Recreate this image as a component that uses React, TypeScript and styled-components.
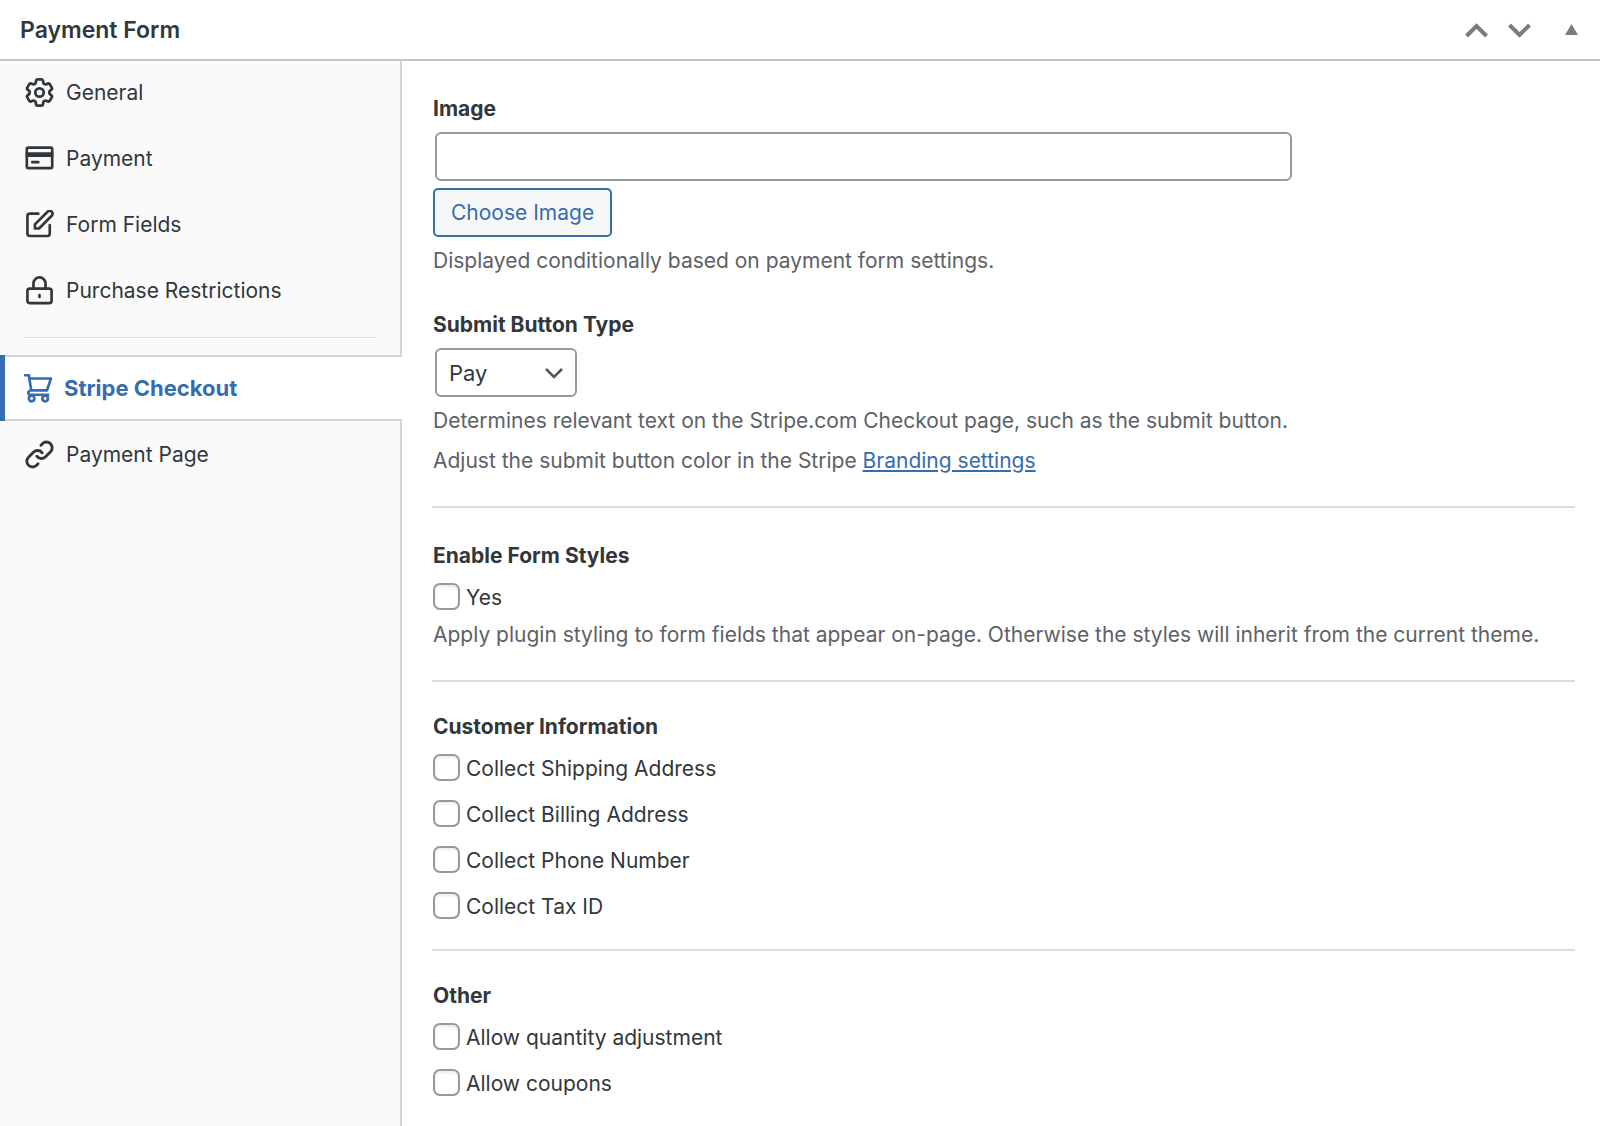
import React from "react";
import styled, { createGlobalStyle, css } from "styled-components";

const Global = createGlobalStyle`
  *, *::before, *::after { box-sizing: border-box; }
  body { margin: 0; background: #fff; }
  body, input, select, button {
    font-family: Inter, "Liberation Sans", sans-serif;
    font-size: 21px;
    color: #32373c;
  }
`;

const Page = styled.div`
  display: flex;
  flex-direction: column;
  min-height: 100vh;
`;

const Header = styled.header`
  display: flex;
  align-items: center;
  justify-content: space-between;
  height: 61px;
  padding: 0 21px 0 20px;
  border-bottom: 2px solid #c3c4c7;
`;

const Title = styled.h2`
  margin: 0;
  font-size: 23px;
  line-height: 28px;
  font-weight: 600;
`;

const Handles = styled.div`
  display: flex;
  align-items: center;
  gap: 18px;
`;

const Handle = styled.button<{ $last?: boolean }>`
  display: flex;
  padding: 0;
  border: 0;
  background: none;
  color: #787c82;
  margin-left: ${(p) => (p.$last ? "14px" : "0")};
`;

const Columns = styled.div`
  display: flex;
  flex: 1;
`;

const Sidebar = styled.nav`
  display: flex;
  flex-direction: column;
  width: 402px;
  flex-shrink: 0;
`;

const Group = styled.div<{ $fill?: boolean }>`
  display: flex;
  flex-direction: column;
  gap: 4px;
  background: #fafafa;
  border-right: 2px solid #d2d4d5;
  padding: ${(p) => (p.$fill ? "2px 0 0" : "0 0 17px")};
  flex: ${(p) => (p.$fill ? "1" : "none")};
`;

const Divider = styled.hr`
  width: calc(100% - 46px);
  margin: 12px 23px 0;
  border: 0;
  border-top: 1px solid #dfe0e1;
`;

const Tab = styled.a<{ $active?: boolean }>`
  display: flex;
  align-items: center;
  gap: 12px;
  height: 62px;
  padding: 0 25px;
  color: inherit;
  text-decoration: none;
  ${(p) =>
    p.$active &&
    css`
      position: relative;
      height: 66px;
      gap: 11px;
      padding: 0 24px;
      border: solid #d2d4d5;
      border-width: 2px 0;
      color: #366dad;
      font-size: 22px;
      font-weight: 700;
      &::before {
        content: "";
        position: absolute;
        inset: -2px auto -2px 0;
        width: 5px;
        background: #366dad;
      }
    `}
`;

const Content = styled.main`
  flex: 1;
  min-width: 0;
  padding: 35px 25px 28px 31px;
`;

const Field = styled.div`
  display: flex;
  flex-direction: column;
  align-items: flex-start;
  & + & { margin-top: 36px; }
`;

const labelText = css`
  display: block;
  padding: 0;
  line-height: 26px;
  font-weight: 700;
`;

const Label = styled.label`
  ${labelText}
  margin-bottom: 10px;
`;

const Legend = styled.legend`
  ${labelText}
  margin-bottom: 14px;
`;

const TextInput = styled.input`
  width: 75%;
  height: 49px;
  margin-left: 2px;
  padding: 0 14px;
  border: 2px solid #96999d;
  border-radius: 6px;
  background: #fff;
`;

const Button = styled.button`
  height: 49px;
  margin-top: 7px;
  padding: 0 16px;
  border: 2px solid #366dad;
  border-radius: 5px;
  background: #f6f7f7;
  color: #366dad;
`;

const SelectBox = styled.div`
  display: grid;
  align-items: center;
  margin-left: 2px;
  svg {
    grid-area: 1 / 1;
    justify-self: end;
    margin-right: 13px;
    pointer-events: none;
  }
`;

const Select = styled.select`
  grid-area: 1 / 1;
  appearance: none;
  width: 142px;
  height: 49px;
  padding: 0 40px 0 12px;
  border: 2px solid #96999d;
  border-radius: 6px;
  background: #fff;
  font-size: 22px;
`;

const Help = styled.p<{ $tight?: boolean }>`
  margin: ${(p) => (p.$tight ? "7px" : "9px")} 0 0;
  line-height: 30px;
  color: #5d6168;
  & + & { margin-top: 10px; }
`;

const Link = styled.a`
  color: #366dad;
`;

const Separator = styled.hr<{ $place?: "first" | "last" }>`
  margin: ${(p) => (p.$place === "last" ? "27px" : "30px")} 0 ${(p) => (p.$place === "first" ? "35px" : "32px")} -1px;
  border: 0;
  border-top: 2px solid #dcdcde;
`;

const Fieldset = styled.fieldset`
  margin: 0;
  padding: 0;
  border: 0;
`;

const Options = styled.div`
  display: flex;
  flex-direction: column;
  align-items: flex-start;
  gap: 16px;
`;

const Option = styled.label`
  display: flex;
  align-items: flex-start;
  gap: 6px;
  line-height: 30px;
`;

const Checkbox = styled.input`
  appearance: none;
  width: 27px;
  height: 27px;
  margin: 0;
  border: 2px solid #96999d;
  border-radius: 7px;
  background: #fff;
  box-shadow: inset 0 2px 3px rgba(0, 0, 0, 0.08);
  &:checked { background: #366dad; }
`;

type IconProps = { children: React.ReactNode; width?: number; box?: string };

const Icon = ({ children, width = 2.2, box = "0 0 24 24" }: IconProps) => (
  <svg width="29" height="29" viewBox={box} fill="none" stroke="currentColor" strokeWidth={width} strokeLinecap="round" strokeLinejoin="round" aria-hidden="true">
    {children}
  </svg>
);

const Gear = () => (
  <Icon box="2 2 20 20" width={1.9}>
    <path d="M9.594 3.94c.09-.542.56-.94 1.11-.94h2.593c.55 0 1.02.398 1.11.94l.213 1.281c.063.374.313.686.645.87.074.04.147.083.22.127.325.196.72.257 1.075.124l1.217-.456a1.125 1.125 0 0 1 1.37.49l1.296 2.247a1.125 1.125 0 0 1-.26 1.431l-1.003.827c-.293.241-.438.613-.43.992a7.723 7.723 0 0 1 0 .255c-.008.378.137.75.43.991l1.004.827c.424.35.534.955.26 1.43l-1.298 2.247a1.125 1.125 0 0 1-1.369.491l-1.217-.456c-.355-.133-.75-.072-1.076.124a6.47 6.47 0 0 1-.22.128c-.331.183-.581.495-.644.869l-.213 1.281c-.09.543-.56.94-1.11.94h-2.594c-.55 0-1.019-.398-1.11-.94l-.213-1.281c-.062-.374-.312-.686-.644-.87a6.52 6.52 0 0 1-.22-.127c-.325-.196-.72-.257-1.076-.124l-1.217.456a1.125 1.125 0 0 1-1.369-.49l-1.297-2.247a1.125 1.125 0 0 1 .26-1.431l1.004-.827c.292-.24.437-.613.43-.991a6.932 6.932 0 0 1 0-.255c.007-.38-.138-.751-.43-.992l-1.004-.827a1.125 1.125 0 0 1-.26-1.43l1.297-2.247a1.125 1.125 0 0 1 1.37-.491l1.216.456c.356.133.751.072 1.076-.124.072-.044.146-.086.22-.128.332-.183.582-.495.644-.869l.214-1.28Z" />
    <circle cx="12" cy="12" r="2.9" />
  </Icon>
);
const Card = () => (
  <Icon>
    <rect x="1.500" y="3" width="21" height="17" rx="1.200" />
    <path d="M1.500 8h21M1.500 9.700h21M6 15h5" />
  </Icon>
);
const Edit = () => (
  <Icon>
    <path d="M11 3H4A2 2 0 0 0 2 5v14.500a2 2 0 0 0 2 2h14.500a2 2 0 0 0 2-2v-7" />
    <path d="M8.200 15.300v-3.400L18.700 1.400a2.300 2.300 0 0 1 3.400 3.400L11.600 15.300z" />
  </Icon>
);
const Lock = () => (
  <Icon>
    <rect x="2" y="10.500" width="20" height="12" rx="2" />
    <path d="M7 10.500V6.200a5 5 0 0 1 10 0v4.300M12 15.800v1.600" />
  </Icon>
);
const Cart = () => (
  <Icon>
    <path d="M1 1h3l2 12.500H19L22.300 3.700H4.400M6 13.500c-3 .5-3.500 3.700-.5 3.700H20" />
    <circle cx="6.300" cy="20.300" r="2.300" />
    <circle cx="17.500" cy="20.300" r="2.300" />
  </Icon>
);
const Chain = () => (
  <Icon width={2.4}>
    <path d="M13.200 4.300l1.200-1.200a4.600 4.600 0 0 1 6.700 6.700l-4.300 4.200a4.700 4.700 0 0 1-7-.6" />
    <path d="M10.800 19.700l-1.200 1.200a4.600 4.600 0 0 1-6.700-6.700l4.300-4.200a4.700 4.700 0 0 1 7 .6" />
  </Icon>
);

const Chevron = ({ up }: { up?: boolean }) => (
  <svg width="25" height="16" viewBox="0 0 25 16" fill="none" stroke="currentColor" strokeWidth="4" aria-hidden="true">
    <path d={up ? "M2.500 14L12.500 4L22.500 14" : "M2.500 3L12.500 13L22.500 3"} />
  </svg>
);

type CheckGroupProps = { title: string; options: string[]; help?: string; place?: "first" | "last" };

const groups: CheckGroupProps[] = [
  {
    title: "Enable Form Styles",
    options: ["Yes"],
    help: "Apply plugin styling to form fields that appear on-page. Otherwise the styles will inherit from the current theme.",
    place: "first",
  },
  { title: "Customer Information", options: ["Collect Shipping Address", "Collect Billing Address", "Collect Phone Number", "Collect Tax ID"] },
  { title: "Other", options: ["Allow quantity adjustment", "Allow coupons"], place: "last" },
];

function CheckGroup({ title, options, help, place }: CheckGroupProps) {
  return (
    <>
      <Separator $place={place} />
      <Fieldset>
        <Legend>{title}</Legend>
        <Options>
          {options.map((o) => (
            <Option key={o}>
              <Checkbox type="checkbox" />
              {o}
            </Option>
          ))}
        </Options>
        {help && <Help $tight>{help}</Help>}
      </Fieldset>
    </>
  );
}

export default function App() {
  return (
    <Page>
      <Global />
      <Header>
        <Title>Payment Form</Title>
        <Handles>
          <Handle type="button" aria-label="Move up"><Chevron up /></Handle>
          <Handle type="button" aria-label="Move down"><Chevron /></Handle>
          <Handle type="button" aria-label="Toggle panel" $last>
            <svg width="15" height="12" viewBox="0 0 15 12" fill="currentColor" aria-hidden="true"><path d="M7.500 0L14 11H1z" /></svg>
          </Handle>
        </Handles>
      </Header>
      <Columns>
        <Sidebar>
          <Group>
            <Tab href="#general"><Gear />General</Tab>
            <Tab href="#payment"><Card />Payment</Tab>
            <Tab href="#fields"><Edit />Form Fields</Tab>
            <Tab href="#restrictions"><Lock />Purchase Restrictions</Tab>
            <Divider />
          </Group>
          <Tab href="#checkout" $active><Cart />Stripe Checkout</Tab>
          <Group $fill>
            <Tab href="#page"><Chain />Payment Page</Tab>
          </Group>
        </Sidebar>
        <Content>
          <Field>
            <Label htmlFor="image">Image</Label>
            <TextInput id="image" type="text" />
            <Button type="button">Choose Image</Button>
            <Help>Displayed conditionally based on payment form settings.</Help>
          </Field>
          <Field>
            <Label htmlFor="type">Submit Button Type</Label>
            <SelectBox>
              <Select id="type" defaultValue="Pay">
                <option>Pay</option>
              </Select>
              <svg width="20" height="14" viewBox="0 0 20 14" fill="none" stroke="#50575e" strokeWidth="2.500" aria-hidden="true"><path d="M2 3l8 8 8-8" /></svg>
            </SelectBox>
            <Help>Determines relevant text on the Stripe.com Checkout page, such as the submit button.</Help>
            <Help>Adjust the submit button color in the Stripe <Link href="#branding">Branding settings</Link></Help>
          </Field>
          {groups.map((g) => <CheckGroup key={g.title} {...g} />)}
        </Content>
      </Columns>
    </Page>
  );
}
